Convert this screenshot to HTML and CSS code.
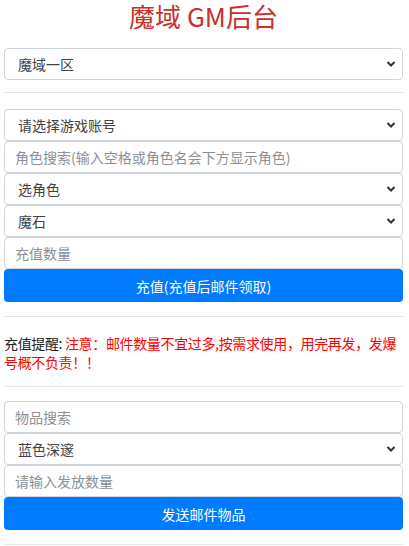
FILE: index.html
```html
<!DOCTYPE html>
<html lang="zh-CN">
<head>
    <meta charset="UTF-8">
    <meta name="viewport" content="width=device-width, initial-scale=1.0">
    <title>魔域 GM后台</title>
    <link rel="stylesheet" href="styles.css">
</head>
<body>
    <div class="container">
        <h1 class="title">魔域 GM后台</h1>

        <div class="select-wrap">
            <select class="form-control">
                <option>魔域一区</option>
            </select>
            <svg class="chevron" viewBox="0 0 10 8"><path d="M1.5 2 L5 5.5 L8.5 2" /></svg>
        </div>

        <hr>

        <div class="select-wrap">
            <select class="form-control">
                <option>请选择游戏账号</option>
            </select>
            <svg class="chevron" viewBox="0 0 10 8"><path d="M1.5 2 L5 5.5 L8.5 2" /></svg>
        </div>
        <input class="form-control" type="text" placeholder="角色搜索(输入空格或角色名会下方显示角色)">
        <div class="select-wrap">
            <select class="form-control">
                <option>选角色</option>
            </select>
            <svg class="chevron" viewBox="0 0 10 8"><path d="M1.5 2 L5 5.5 L8.5 2" /></svg>
        </div>
        <div class="select-wrap">
            <select class="form-control">
                <option>魔石</option>
            </select>
            <svg class="chevron" viewBox="0 0 10 8"><path d="M1.5 2 L5 5.5 L8.5 2" /></svg>
        </div>
        <input class="form-control" type="text" placeholder="充值数量">
        <button class="btn">充值(充值后邮件领取)</button>

        <hr class="hr-after-btn">

        <p class="notice">充值提醒: <span class="warn">注意：邮件数量不宜过多,按需求使用，用完再发，发爆号概不负责！！</span></p>

        <hr class="hr-after-notice">

        <input class="form-control" type="text" placeholder="物品搜索">
        <div class="select-wrap">
            <select class="form-control">
                <option>蓝色深邃</option>
            </select>
            <svg class="chevron" viewBox="0 0 10 8"><path d="M1.5 2 L5 5.5 L8.5 2" /></svg>
        </div>
        <input class="form-control" type="text" placeholder="请输入发放数量">
        <button class="btn">发送邮件物品</button>

        <hr class="hr-after-btn">
    </div>
</body>
</html>
```

FILE: styles.css
```css
/* GM panel page */

body {
    background-color: #fff;
    font-family: "Noto Sans CJK SC", "Noto Sans", sans-serif;
    font-size: 14px;
    color: #212529;
    margin: 0;
    padding: 0;
}

.container {
    padding: 0 6px 0 4px;
    display: flex;
    flex-direction: column;
}

.title {
    margin: 0 0 17px;
    height: 31px;
    line-height: 31px;
    font-size: 26px;
    font-weight: normal;
    color: #c9302c;
    text-align: center;
}

.form-control {
    display: block;
    width: 100%;
    height: 32px;
    box-sizing: border-box;
    padding: 0 10px;
    border: 1px solid #ced4da;
    border-radius: 4px;
    background: #fff;
    font-family: inherit;
    font-size: 14px;
    color: #3d4247;
    outline: none;
}

.form-control::placeholder {
    color: #8a9096;
}

.select-wrap {
    position: relative;
}

.select-wrap select {
    appearance: none;
    -webkit-appearance: none;
    padding-left: 13px;
}

.chevron {
    position: absolute;
    right: 7px;
    top: 12px;
    width: 10px;
    height: 8px;
    pointer-events: none;
}

.chevron path {
    fill: none;
    stroke: #333;
    stroke-width: 2;
}

.btn {
    display: block;
    width: 100%;
    height: 33px;
    border: none;
    border-radius: 4px;
    background-color: #007bff;
    color: #fff;
    font-family: inherit;
    font-size: 14px;
    cursor: pointer;
}

hr {
    width: 100%;
    margin: 12px 0 16px;
    border: none;
    border-top: 1px solid #e5e5e5;
}

.hr-after-btn {
    margin: 14px 0 0;
}

.notice {
    margin: 17px 0 0;
    line-height: 19px;
    letter-spacing: -0.35px;
    color: #222;
}

.warn {
    color: #f00;
}

.hr-after-notice {
    margin: 14px 0 14px;
}
```
